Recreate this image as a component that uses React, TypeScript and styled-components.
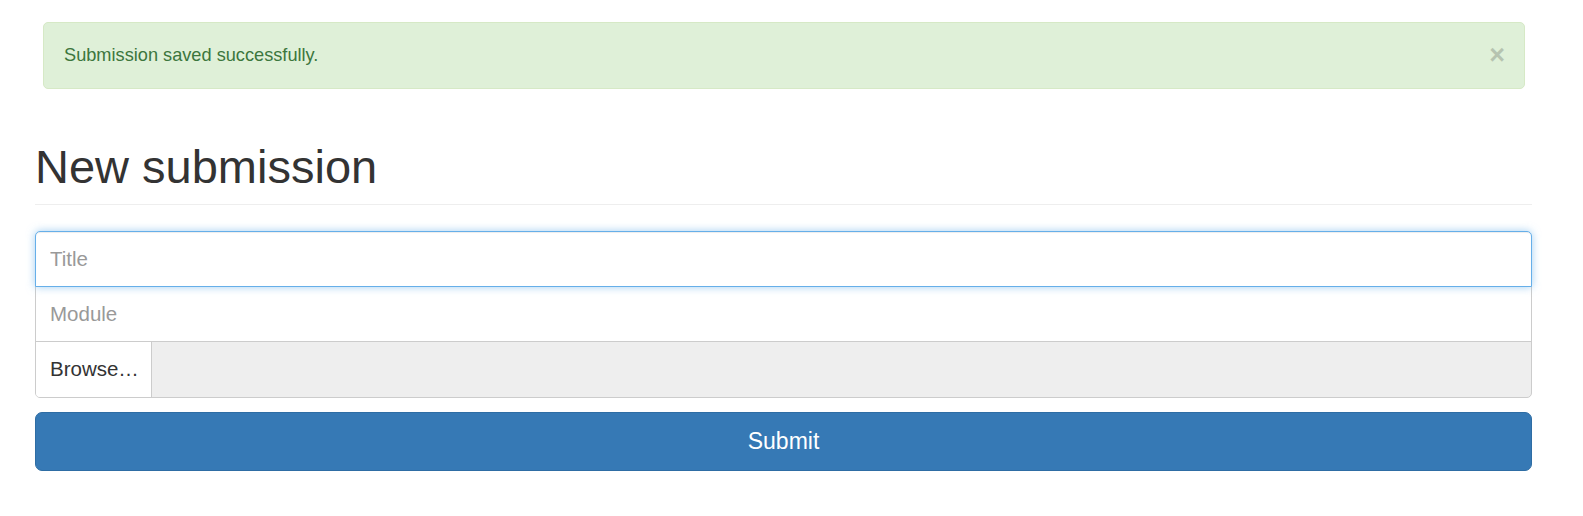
import styled, { createGlobalStyle, css } from "styled-components";

const GlobalStyle = createGlobalStyle`
  html, body {
    margin: 0;
    padding: 0;
    background: #fff;
  }
  body {
    font-family: "Liberation Sans", Arial, Helvetica, sans-serif;
    color: #333;
  }
  * {
    box-sizing: border-box;
  }
`;

const Page = styled.div`
  padding: 22px 51px 40px 35px;
`;

const Alert = styled.div`
  display: flex;
  align-items: center;
  justify-content: space-between;
  height: 67px;
  margin: 0 7px 0 8px;
  padding: 0 19px 0 20px;
  background-color: #dff0d8;
  border: 1px solid #d6e9c6;
  border-radius: 5px;
  color: #3c763d;
  font-size: 18.2px;
`;

const CloseButton = styled.button`
  padding: 0;
  margin: 0;
  background: none;
  border: none;
  color: #000;
  opacity: 0.18;
  font-family: "Liberation Sans", Arial, sans-serif;
  font-size: 27px;
  font-weight: bold;
  line-height: 1;
  cursor: pointer;
`;

const Header = styled.div`
  margin-top: 52px;
  padding-bottom: 11px;
  border-bottom: 1px solid #eee;
`;

const Heading = styled.h1`
  margin: 0;
  font-size: 47px;
  font-weight: 400;
  line-height: 1.1;
  color: #333;
`;

const Form = styled.form`
  display: flex;
  flex-direction: column;
  margin-top: 26px;
`;

const Field = styled.input<{ $focused?: boolean; $first?: boolean }>`
  display: block;
  width: 100%;
  height: 56px;
  margin: 0 0 -1px;
  padding: 0 14px;
  font-family: "Liberation Sans", Arial, sans-serif;
  font-size: 20.5px;
  color: #555;
  background: #fff;
  border: 1px solid #ccc;
  border-radius: ${(p) => (p.$first ? "5px 5px 0 0" : "0")};
  outline: none;
  position: relative;
  &::placeholder {
    color: #999;
  }
  ${(p) =>
    p.$focused &&
    css`
      z-index: 2;
      border-color: #66afe9;
      box-shadow: inset 0 1px 1px rgba(0, 0, 0, 0.075),
        0 0 8px rgba(102, 175, 233, 0.6);
    `}
`;

const FileRow = styled.div`
  display: flex;
  height: 57px;
  border: 1px solid #ccc;
  border-radius: 0 0 5px 5px;
  overflow: hidden;
  background: #eee;
`;

const BrowseButton = styled.label`
  display: flex;
  align-items: center;
  width: 116px;
  padding: 0 14px;
  background: #fff;
  border-right: 1px solid #ccc;
  font-size: 20.5px;
  color: #333;
  white-space: nowrap;
  cursor: pointer;
`;

const FileName = styled.div`
  flex: 1;
`;

const SubmitButton = styled.button`
  width: 100%;
  height: 59px;
  margin-top: 14px;
  padding: 0;
  font-family: "Liberation Sans", Arial, sans-serif;
  font-size: 23px;
  color: #fff;
  background-color: #3679b5;
  border: 1px solid #2e6da4;
  border-radius: 7px;
  cursor: pointer;
`;

const App = () => {
  return (
    <>
      <GlobalStyle />
      <Page>
        <Alert>
          <span>Submission saved successfully.</span>
          <CloseButton type="button" aria-label="Close">
            ×
          </CloseButton>
        </Alert>
        <Header>
          <Heading>New submission</Heading>
        </Header>
        <Form onSubmit={(e) => e.preventDefault()}>
          <Field type="text" placeholder="Title" $first $focused />
          <Field type="text" placeholder="Module" />
          <FileRow>
            <BrowseButton>Browse…</BrowseButton>
            <FileName />
          </FileRow>
          <SubmitButton type="submit">Submit</SubmitButton>
        </Form>
      </Page>
    </>
  );
};

export default App;
